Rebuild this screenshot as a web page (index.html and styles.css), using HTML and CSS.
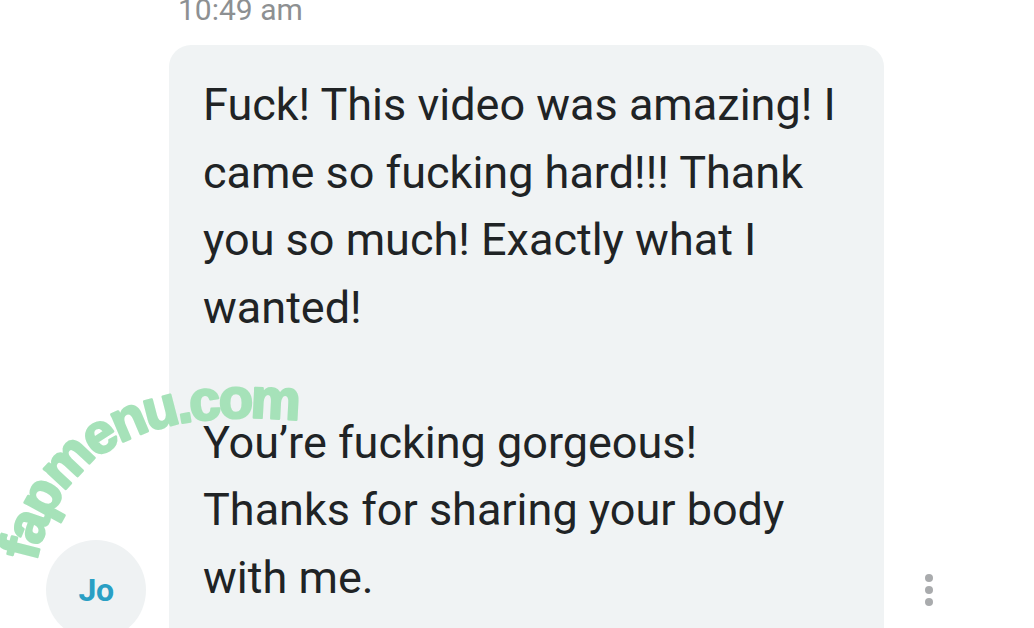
FILE: index.html
```html
<!DOCTYPE html>
<html>
<head>
<meta charset="utf-8">
<link rel="stylesheet" href="styles.css">
</head>
<body>
<div class="screen">
  <div class="time">10:49 am</div>
  <div class="row">
    <div class="avatar-col">
      <div class="avatar">Jo</div>
    </div>
    <div class="bubble">
      <p>Fuck! This video was amazing! I came so fucking hard!!! Thank you so much! Exactly what I wanted!</p>
      <p class="gap">You’re fucking gorgeous! Thanks for sharing your body with me.</p>
    </div>
    <div class="menu-col">
      <div class="dots"><span></span><span></span><span></span></div>
    </div>
  </div>
  <svg class="watermark" width="1034" height="628" viewBox="0 0 1034 628">
    <defs>
      <path id="arc" d="M 36 562 C 60 455, 140 398, 330 424"/>
    </defs>
    <text class="wm-text"><textPath href="#arc">fapmenu.com</textPath></text>
  </svg>
</div>
</body>
</html>
```
FILE: styles.css
```css
html, body {
  margin: 0;
  padding: 0;
  background: #ffffff;
}
.screen {
  position: relative;
  width: 1034px;
  height: 628px;
  overflow: hidden;
  font-family: Roboto, "Liberation Sans", sans-serif;
}
.time {
  margin-left: 178px;
  margin-top: -10px;
  height: 55px;
  font-size: 30px;
  line-height: 40px;
  color: #8d9092;
}
.row {
  display: flex;
  align-items: flex-start;
}
.avatar-col {
  width: 169px;
  flex: none;
}
.avatar {
  margin-left: 46px;
  margin-top: 495px;
  width: 100px;
  height: 100px;
  border-radius: 50%;
  background: #eff2f3;
  color: #2a9fc4;
  font-weight: 700;
  font-size: 32px;
  display: flex;
  align-items: center;
  justify-content: center;
  letter-spacing: -0.5px;
}
.bubble {
  width: 715px;
  flex: none;
  box-sizing: border-box;
  background: #f0f3f4;
  border-radius: 22px 22px 0 0;
  padding: 26px 30px 60px 34px;
  color: #202325;
  font-size: 45px;
  line-height: 67.5px;
}
.bubble p {
  margin: 0;
}
.bubble p.gap {
  margin-top: 67.5px;
}
.menu-col {
  flex: 1;
  display: flex;
  justify-content: flex-start;
  padding-top: 529px;
  padding-left: 41px;
}
.dots {
  display: flex;
  flex-direction: column;
  gap: 4px;
}
.dots span {
  width: 8px;
  height: 8px;
  border-radius: 50%;
  background: #a9abad;
}
.watermark {
  position: absolute;
  left: 0;
  top: 0;
  pointer-events: none;
}
.wm-text {
  font-family: "Liberation Sans", Arial, sans-serif;
  font-weight: 700;
  font-size: 56px;
  letter-spacing: -3px;
  fill: #a6e2b9;
  stroke: #a6e2b9;
  stroke-width: 2.5px;
  stroke-linejoin: round;
}
```
